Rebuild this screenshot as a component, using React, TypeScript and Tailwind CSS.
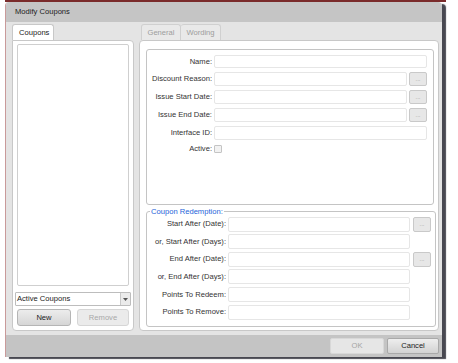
const font = { fontFamily: '"Liberation Sans", Arial, sans-serif' };

function Field({ wide, dots }: { wide?: boolean; dots?: boolean }) {
  return (
    <div className="flex h-full items-stretch gap-[2px]">
      <div className={`${wide ? 'w-[213px]' : 'w-[193px]'} rounded-[2px] border border-[#e6e6e6] bg-white`} />
      {dots && <DotsButton />}
    </div>
  );
}

function DotsButton() {
  return (
    <div className="flex w-[18px] items-center justify-center rounded-[2px] border border-[#c9c9c9] bg-[#e7e7e7] text-[6px] leading-none text-[#9a9a9a]">
      ...
    </div>
  );
}

function Row({ label, children, labelW }: { label: string; children: React.ReactNode; labelW: string }) {
  return (
    <div className="flex h-full items-center">
      <div className={`${labelW} shrink-0 pr-[2px] text-right text-[#333]`}>{label}</div>
      {children}
    </div>
  );
}

export default function App() {
  return (
    <div className="h-[363px] w-[458px] overflow-hidden bg-white text-[7.6px] leading-none" style={font}>
      <div className="ml-[5px] h-[2px] w-[441px] bg-[#7a2b2b]" />
      <div className="ml-[5px] flex h-[355px] w-[437px] flex-col overflow-hidden rounded-t-[4px] border-l border-[#c99a9a] shadow-[4px_2px_1px_rgba(40,40,50,0.85)]">
        {/* title bar */}
        <div className="flex h-[20px] items-center bg-[#c5c5c5] pl-[9px] text-[#222]">Modify Coupons</div>

        {/* body */}
        <div className="flex h-[313px] gap-[5px] bg-[#e4e4e4] pl-[6px] pt-[2px]">
          {/* left column */}
          <div className="flex w-[122px] flex-col">
            <div className="ml-[0px] flex h-[16px] w-[42px] items-center rounded-t-[3px] border border-b-0 border-[#c8c8c8] bg-white pl-[6px] text-[#222]">
              Coupons
            </div>
            <div className="flex h-[291px] flex-col rounded-b-[4px] rounded-tr-[4px] border border-[#c8c8c8] bg-white px-[4px] pt-[3px]">
              <div className="h-[242px] rounded-[2px] border border-[#cfcfcf] bg-white" />
              <div className="-mx-[2px] mt-[6px] flex h-[14px] rounded-[1px] border border-[#bdbdbd] bg-white">
                <div className="flex flex-1 items-center pl-[1px] text-[#222]">Active Coupons</div>
                <div className="flex w-[10px] items-center justify-center border-l border-[#c9c9c9] bg-[#ebebeb]">
                  <svg width="5" height="3" viewBox="0 0 5 3">
                    <path d="M0 0h5L2.5 3z" fill="#555" />
                  </svg>
                </div>
              </div>
              <div className="mt-[3px] flex h-[17px] justify-between px-[-1px]">
                <div className="flex w-[54px] items-center justify-center rounded-[3px] border border-[#b5b5b5] bg-gradient-to-b from-[#ececec] to-[#d6d6d6] text-[#222]">
                  New
                </div>
                <div className="flex w-[52px] items-center justify-center rounded-[3px] border border-[#d6d6d6] bg-[#ebebeb] text-[#a8a8a8]">
                  Remove
                </div>
              </div>
            </div>
          </div>

          {/* right column */}
          <div className="flex w-[300px] flex-col">
            <div className="flex h-[16px] pl-[2px]">
              <div className="flex w-[40px] items-center justify-center rounded-t-[3px] border border-b-0 border-[#d0d0d0] bg-[#e9e9e9] text-[#9d9d9d]">
                General
              </div>
              <div className="flex w-[40px] items-center justify-center rounded-t-[3px] border border-b-0 border-l-0 border-[#d0d0d0] bg-[#e9e9e9] text-[#9d9d9d]">
                Wording
              </div>
            </div>
            <div className="flex h-[291px] flex-col rounded-[4px] border border-[#c8c8c8] bg-white pl-[6px] pr-[4px] pt-[8px]">
              {/* general box */}
              <div className="flex h-[156px] flex-col gap-[4px] rounded-[3px] border border-[#c4c4c4] bg-white pt-[5px]">
                <div className="h-[13px]">
                  <Row label="Name:" labelW="w-[67px]">
                    <Field wide />
                  </Row>
                </div>
                <div className="h-[14px]">
                  <Row label="Discount Reason:" labelW="w-[67px]">
                    <Field dots />
                  </Row>
                </div>
                <div className="h-[14px]">
                  <Row label="Issue Start Date:" labelW="w-[67px]">
                    <Field dots />
                  </Row>
                </div>
                <div className="h-[14px]">
                  <Row label="Issue End Date:" labelW="w-[67px]">
                    <Field dots />
                  </Row>
                </div>
                <div className="h-[14px]">
                  <Row label="Interface ID:" labelW="w-[67px]">
                    <Field wide />
                  </Row>
                </div>
                <div className="h-[9px]">
                  <Row label="Active:" labelW="w-[67px]">
                    <div className="h-[8px] w-[8px] rounded-[1px] border border-[#c4c4c4] bg-[#f2f2f2]" />
                  </Row>
                </div>
              </div>

              {/* coupon redemption */}
              <fieldset className="mt-[3px] h-[119px] rounded-[3px] border border-[#c4c4c4] pr-[4px]">
                <legend className="ml-[3px] px-[1px] text-[#2563d9]">Coupon Redemption:</legend>
                <div className="mt-[1px] grid grid-rows-[repeat(6,15px)] gap-y-[2.6px]">
                  <Row label="Start After (Date):" labelW="w-[81px]">
                    <div className="flex h-full gap-[3px]">
                      <div className="w-[182px] rounded-[2px] border border-[#e6e6e6]" />
                      <DotsButton />
                    </div>
                  </Row>
                  <Row label="or, Start After (Days):" labelW="w-[81px]">
                    <div className="h-full w-[182px] rounded-[2px] border border-[#e6e6e6]" />
                  </Row>
                  <Row label="End After (Date):" labelW="w-[81px]">
                    <div className="flex h-full gap-[3px]">
                      <div className="w-[182px] rounded-[2px] border border-[#e6e6e6]" />
                      <DotsButton />
                    </div>
                  </Row>
                  <Row label="or, End After (Days):" labelW="w-[81px]">
                    <div className="h-full w-[182px] rounded-[2px] border border-[#e6e6e6]" />
                  </Row>
                  <Row label="Points To Redeem:" labelW="w-[81px]">
                    <div className="h-full w-[182px] rounded-[2px] border border-[#e6e6e6]" />
                  </Row>
                  <Row label="Points To Remove:" labelW="w-[81px]">
                    <div className="h-full w-[182px] rounded-[2px] border border-[#e6e6e6]" />
                  </Row>
                </div>
              </fieldset>
            </div>
          </div>
        </div>

        {/* bottom bar */}
        <div className="flex h-[22px] items-center justify-end gap-[3px] bg-[#c4c4c4] pr-[3px]">
          <div className="flex h-[16px] w-[54px] items-center justify-center rounded-[2px] border border-[#d8d8d8] bg-[#e6e6e6] text-[#a5a5a5]">
            OK
          </div>
          <div className="flex h-[16px] w-[52px] items-center justify-center rounded-[2px] border border-[#a9a9a9] bg-gradient-to-b from-[#eeeeee] to-[#d2d2d2] text-[#222]">
            Cancel
          </div>
        </div>
      </div>
    </div>
  );
}
